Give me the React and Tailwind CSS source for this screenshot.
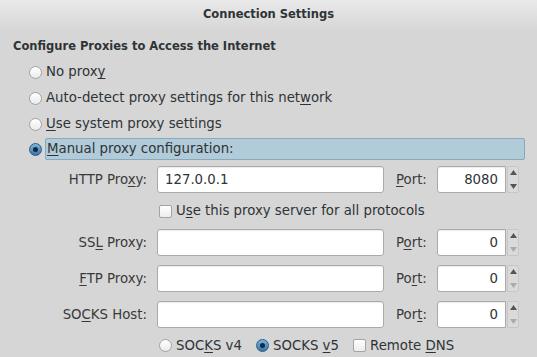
import React from "react";

function Radio({ checked }) {
  if (checked) {
    return (
      <span className="w-[13px] h-[13px] rounded-full border border-[#2a5d84] bg-gradient-to-b from-[#7fb3dc] to-[#3677aa] flex items-center justify-center shrink-0">
        <span className="w-[5px] h-[5px] rounded-full bg-[#13293d]" />
      </span>
    );
  }
  return (
    <span className="w-[13px] h-[13px] rounded-full border border-[#a3a3a3] bg-gradient-to-b from-white to-[#ebebeb] shrink-0" />
  );
}

function Check() {
  return (
    <span className="w-[13px] h-[13px] rounded-[2px] border border-[#a3a3a3] bg-gradient-to-b from-white to-[#ececec] shrink-0" />
  );
}

function U({ children }) {
  return <span className="underline underline-offset-[2px] decoration-[1px]">{children}</span>;
}

function Spinner({ downDisabled }) {
  return (
    <div className="w-[12px] h-[27px] ml-[1px] flex flex-col justify-between items-center py-[3px] bg-[#dadada] border border-[#c6c6c6] rounded-r-[2px]">
      <svg width="7" height="5" viewBox="0 0 7 5">
        <path d="M3.5 0 L7 5 L0 5 Z" fill="#555" />
      </svg>
      <svg width="7" height="5" viewBox="0 0 7 5">
        <path d="M0 0 L7 0 L3.5 5 Z" fill={downDisabled ? "#aaa" : "#555"} />
      </svg>
    </div>
  );
}

function Row({ label, value, port, portLabel, downDisabled }) {
  return (
    <div className="flex items-center h-[27px]">
      <div className="w-[147px] text-right text-[#3a3a3a]">{label}</div>
      <div className="ml-[10px] w-[227px] h-[27px] bg-white border border-[#aaaaaa] rounded-[3px] shadow-[inset_0_1px_1px_rgba(0,0,0,0.08)] flex items-center px-[7px]">
        {value}
      </div>
      <div className="ml-[12px] w-[41px] text-[#3a3a3a]">{portLabel}</div>
      <div className="w-[69px] h-[27px] bg-white border border-[#aaaaaa] rounded-l-[3px] shadow-[inset_0_1px_1px_rgba(0,0,0,0.08)] flex items-center justify-end px-[7px]">
        {port}
      </div>
      <Spinner downDisabled={downDisabled} />
    </div>
  );
}

export default function App() {
  return (
    <div className="w-[537px] h-[357px] overflow-hidden bg-[#d6d6d6] font-['DejaVu_Sans',sans-serif] text-[13.3px] text-[#2e3436] leading-none">
      <div className="h-[28px] bg-gradient-to-b from-[#e9e9e9] to-[#d8d8d8] flex items-center justify-center font-bold text-[11.5px] pt-[1px]">
        Connection Settings
      </div>
      <div className="pt-[10px]">
        <div className="pl-[13px] h-[18px] flex items-center font-bold text-[11.5px]">
          Configure Proxies to Access the Internet
        </div>
        <div className="mt-[3px] pl-[29px] flex flex-col">
          <div className="h-[26px] flex items-center gap-[4px]">
            <Radio />
            <span>No prox<U>y</U></span>
          </div>
          <div className="h-[26px] flex items-center gap-[4px]">
            <Radio />
            <span>Auto-detect proxy settings for this net<U>w</U>ork</span>
          </div>
          <div className="h-[26px] flex items-center gap-[4px]">
            <Radio />
            <span><U>U</U>se system proxy settings</span>
          </div>
          <div className="h-[24px] flex items-center gap-[3px]">
            <Radio checked />
            <div className="w-[480px] h-[22px] bg-[#b1cbd8] border border-[#86a9bd] rounded-[2px] flex items-center pl-[1px]">
              <span><U>M</U>anual proxy configuration:</span>
            </div>
          </div>
        </div>
        <div className="mt-[5px]">
          <Row
            label={<span>HTTP Pro<U>x</U>y:</span>}
            value="127.0.0.1"
            portLabel={<span><U>P</U>ort:</span>}
            port="8080"
          />
          <div className="h-[36px] flex items-center pl-[159px] gap-[4px]">
            <Check />
            <span>U<U>s</U>e this proxy server for all protocols</span>
          </div>
          <div className="flex flex-col gap-[9px]">
            <Row
              label={<span>SS<U>L</U> Proxy:</span>}
              value=""
              portLabel={<span>P<U>o</U>rt:</span>}
              port="0"
              downDisabled
            />
            <Row
              label={<span><U>F</U>TP Proxy:</span>}
              value=""
              portLabel={<span>Po<U>r</U>t:</span>}
              port="0"
              downDisabled
            />
            <Row
              label={<span>SO<U>C</U>KS Host:</span>}
              value=""
              portLabel={<span>Por<U>t</U>:</span>}
              port="0"
              downDisabled
            />
          </div>
          <div className="h-[36px] flex items-center pl-[159px]">
            <div className="flex items-center gap-[4px] w-[97px]">
              <Radio />
              <span>SOC<U>K</U>S v4</span>
            </div>
            <div className="flex items-center gap-[4px] w-[97px]">
              <Radio checked />
              <span>SOCKS <U>v</U>5</span>
            </div>
            <div className="flex items-center gap-[4px]">
              <Check />
              <span>Remote <U>D</U>NS</span>
            </div>
          </div>
        </div>
      </div>
    </div>
  );
}
